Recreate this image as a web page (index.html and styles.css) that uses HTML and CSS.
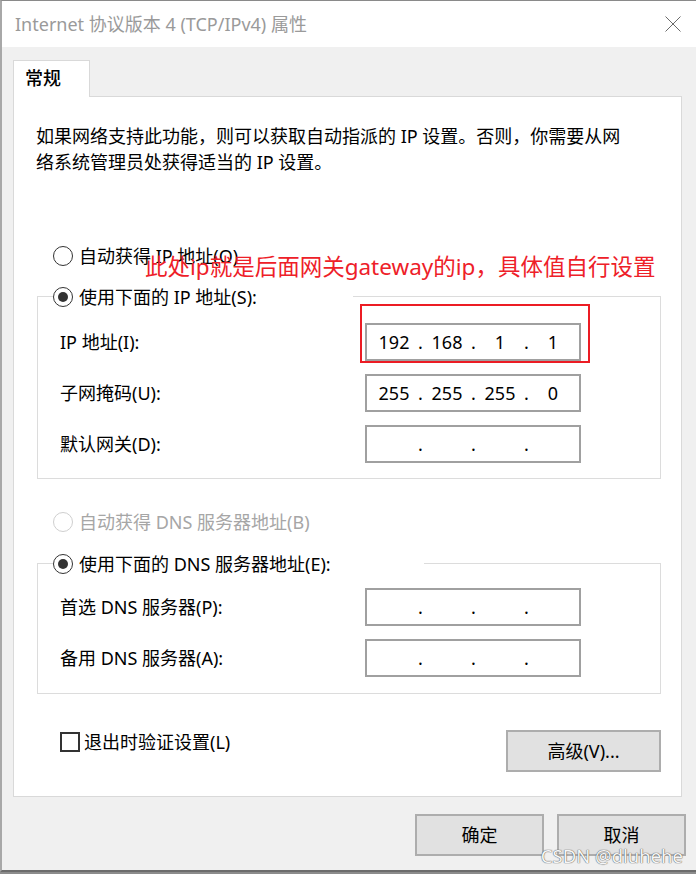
FILE: index.html
```html
<!DOCTYPE html>
<html lang="zh-CN">
<head>
<meta charset="utf-8">
<title>Internet 协议版本 4 (TCP/IPv4) 属性</title>
<link rel="stylesheet" href="styles.css">
</head>
<body>
<div class="window">
  <div class="titlebar">
    <span class="title">Internet 协议版本 4 (TCP/IPv4) 属性</span>
    <svg class="close" width="16" height="16" viewBox="0 0 16 16" aria-hidden="true">
      <path d="M0.5 0.5 L15.5 15.5 M15.5 0.5 L0.5 15.5" stroke="#6a6a6a" stroke-width="1" fill="none"/>
    </svg>
  </div>
  <div class="client">
    <div class="tabs"><div class="tab">常规</div></div>
    <div class="panel">
      <p class="desc">如果网络支持此功能，则可以获取自动指派的 IP 设置。否则，你需要从网<br>络系统管理员处获得适当的 IP 设置。</p>

      <div class="radio-row"><span class="radio"></span><span>自动获得 IP 地址(O)</span></div>

      <div class="group">
        <div class="legend legend-ip"><span class="radio checked"></span><span>使用下面的 IP 地址(S):</span></div>
        <div class="fields">
          <span class="label">IP 地址(I):</span>
          <div class="ipbox">
            <span class="oct">192</span><span class="dot">.</span><span class="oct">168</span><span class="dot">.</span><span class="oct">1</span><span class="dot">.</span><span class="oct">1</span>
            <span class="callout-box"></span>
          </div>
          <span class="label">子网掩码(U):</span>
          <div class="ipbox">
            <span class="oct">255</span><span class="dot">.</span><span class="oct">255</span><span class="dot">.</span><span class="oct">255</span><span class="dot">.</span><span class="oct">0</span>
          </div>
          <span class="label">默认网关(D):</span>
          <div class="ipbox">
            <span class="oct"></span><span class="dot">.</span><span class="oct"></span><span class="dot">.</span><span class="oct"></span><span class="dot">.</span><span class="oct"></span>
          </div>
        </div>
      </div>

      <div class="radio-row radio-row-dns disabled"><span class="radio"></span><span>自动获得 DNS 服务器地址(B)</span></div>

      <div class="group group-dns">
        <div class="legend legend-dns"><span class="radio checked"></span><span>使用下面的 DNS 服务器地址(E):</span></div>
        <div class="fields">
          <span class="label">首选 DNS 服务器(P):</span>
          <div class="ipbox">
            <span class="oct"></span><span class="dot">.</span><span class="oct"></span><span class="dot">.</span><span class="oct"></span><span class="dot">.</span><span class="oct"></span>
          </div>
          <span class="label">备用 DNS 服务器(A):</span>
          <div class="ipbox">
            <span class="oct"></span><span class="dot">.</span><span class="oct"></span><span class="dot">.</span><span class="oct"></span><span class="dot">.</span><span class="oct"></span>
          </div>
        </div>
      </div>

      <div class="bottom-row">
        <label class="check-row"><span class="checkbox"></span><span>退出时验证设置(L)</span></label>
        <button class="btn btn-adv" type="button">高级(V)...</button>
      </div>

      <div class="annotation">此处ip就是后面网关gateway的ip，具体值自行设置</div>
    </div>
    <div class="actions">
      <button class="btn btn-main" type="button">确定</button>
      <button class="btn btn-main" type="button">取消</button>
    </div>
    <div class="watermark">CSDN @dluhehe</div>
  </div>
</div>
</body>
</html>
```
FILE: styles.css
```css
* { box-sizing: border-box; }

html, body {
  margin: 0;
  padding: 0;
}

body {
  width: 696px;
  height: 874px;
  overflow: hidden;
  background: #8c8c8c;
  font-family: "Noto Sans", "Noto Sans CJK SC", sans-serif;
  font-size: 18px;
  color: #000;
}

.window {
  width: 696px;
  height: 872px;
  border-top: 1px solid #8a8a8a;
  border-left: 2px solid #a8a8a8;
  border-bottom: 2px solid #6c6c6c;
  display: flex;
  flex-direction: column;
  background: #f0f0f0;
}

.titlebar {
  height: 46px;
  flex: none;
  background: #fff;
  display: flex;
  align-items: center;
  justify-content: space-between;
  padding: 0 15px 0 13px;
}

.title {
  color: #9a9a9a;
  font-size: 18px;
  line-height: 26px;
  margin-top: -1px;
}

.close {
  display: block;
  margin-top: -1px;
}

.client {
  position: relative;
  flex: 1;
  background: #f0f0f0;
  padding: 13px 10px 0 11px;
}

.tabs {
  height: 36px;
  display: flex;
}

.tab {
  position: relative;
  z-index: 2;
  width: 77px;
  height: 37px;
  background: #fff;
  border: 1px solid #d9d9d9;
  border-bottom: none;
  padding: 4px 0 0 11px;
  line-height: 26px;
  font-weight: 500;
}

.panel {
  position: relative;
  height: 701px;
  margin-right: 4px;
  background: #fff;
  border: 1px solid #d9d9d9;
}

.desc {
  margin: 26px 0 0 0;
  padding-left: 22px;
  line-height: 26px;
}

.radio-row {
  display: flex;
  align-items: center;
  gap: 6px;
  height: 28px;
  margin-top: 67px;
  padding-left: 39px;
  line-height: 28px;
}

.radio-row-dns {
  margin-top: 29px;
}

.disabled {
  color: #a6a6a6;
}

.radio {
  width: 20px;
  height: 20px;
  flex: none;
  border: 1.6px solid #333;
  border-radius: 50%;
  background: #fff;
  display: flex;
  align-items: center;
  justify-content: center;
}

.disabled .radio {
  border-color: #cfcfcf;
}

.radio.checked::after {
  content: "";
  width: 10px;
  height: 10px;
  border-radius: 50%;
  background: #333;
}

.group {
  margin: 26px 20px 0 23px;
  border: 1px solid #dcdcdc;
}

.group-dns {
  margin-top: 27px;
}

.legend {
  display: flex;
  align-items: center;
  gap: 6px;
  height: 28px;
  margin-top: -14px;
  margin-left: 15px;
  background: #fff;
  line-height: 28px;
}

.legend-ip { width: 300px; }
.legend-dns { width: 371px; }

.fields {
  display: grid;
  grid-template-columns: 305px 216px;
  grid-auto-rows: 38px;
  row-gap: 13px;
  align-items: center;
  padding: 12px 0 15px 22px;
}

.group-dns .fields {
  padding-top: 10px;
  padding-bottom: 16px;
}

.label {
  line-height: 26px;
}

.ipbox {
  position: relative;
  height: 38px;
  border: 2px solid #a0a0a0;
  background: #fff;
  display: flex;
  align-items: center;
  padding-left: 4px;
  line-height: 26px;
}

.oct {
  width: 46px;
  text-align: center;
}

.dot {
  width: 7px;
  text-align: center;
}

.callout-box {
  position: absolute;
  left: -7px;
  top: -21px;
  width: 230px;
  height: 59px;
  border: 2px solid #ec1c24;
}

.bottom-row {
  display: flex;
  justify-content: space-between;
  align-items: flex-start;
  margin: 36px 20px 0 0;
  padding-left: 46px;
}

.check-row {
  display: flex;
  align-items: center;
  gap: 4px;
  height: 26px;
  margin-top: -1px;
  line-height: 26px;
}

.checkbox {
  width: 20px;
  height: 20px;
  border: 2px solid #333;
  background: #fff;
  flex: none;
}

.btn {
  font-family: "Noto Sans", "Noto Sans CJK SC", sans-serif;
  font-size: 18px;
  color: #000;
  background: #e1e1e1;
  border: 2px solid #adadad;
  height: 42px;
  padding: 0;
  line-height: 26px;
}

.btn-adv {
  width: 155px;
}

.actions {
  display: flex;
  justify-content: flex-end;
  gap: 13px;
  margin-top: 17px;
}

.btn-main {
  width: 129px;
}

.annotation {
  position: absolute;
  left: 131px;
  top: 156px;
  color: #ee2028;
  font-size: 22.5px;
  line-height: 28px;
  white-space: nowrap;
}

.watermark {
  position: absolute;
  right: 13px;
  bottom: 2px;
  font-size: 18.5px;
  line-height: 24px;
  color: #f6f6f6;
  text-shadow: 0 0 1px #555, 0 0 1px #555;
}
```
